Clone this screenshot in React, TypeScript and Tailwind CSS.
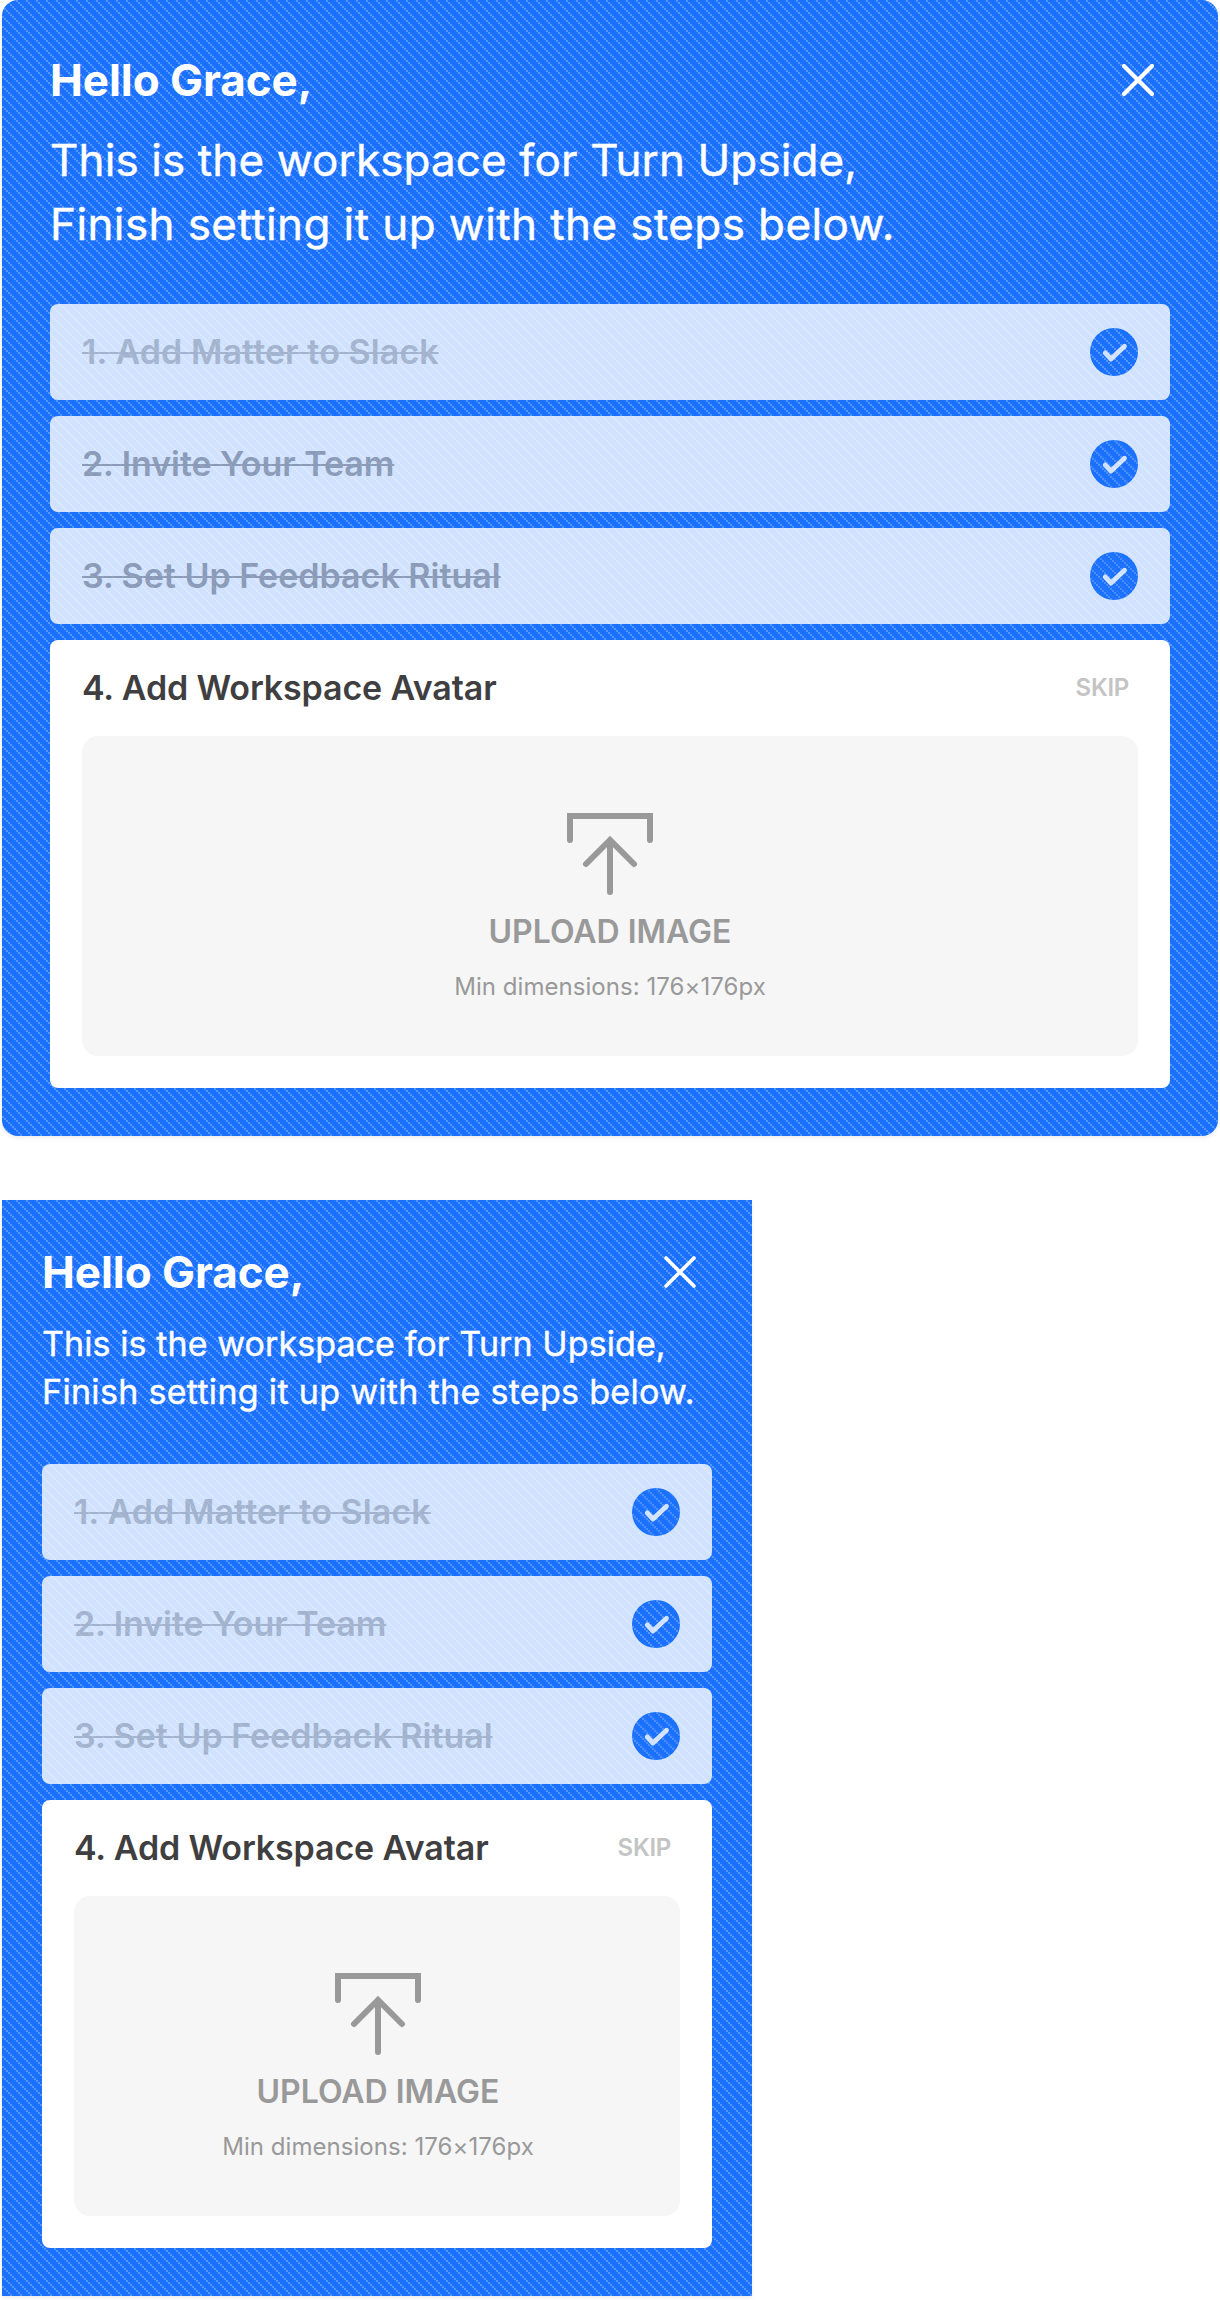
import React from 'react';

const steps = [
  { label: '1. Add Matter to Slack', tracking: 'tracking-[0.1px]' },
  { label: '2. Invite Your Team', tracking: 'tracking-[-0.07px]' },
  { label: '3. Set Up Feedback Ritual', tracking: 'tracking-normal' },
];

function Stripes({ id }: { id: string }) {
  return (
    <svg className="pointer-events-none absolute inset-0 h-full w-full" shapeRendering="crispEdges" aria-hidden="true">
      <defs>
        <pattern id={id} width="10" height="10" patternUnits="userSpaceOnUse">
          <path d="M4 0h2v2h-2zM6 2h2v2h-2zM8 4h2v2h-2zM0 6h2v2h-2zM2 8h2v2h-2z" fill="#fff" fillOpacity="0.26" />
        </pattern>
      </defs>
      <rect width="100%" height="100%" fill={`url(#${id})`} />
    </svg>
  );
}

function CloseIcon({ stroke }: { stroke: number }) {
  return (
    <svg width="32" height="32" viewBox="0 0 32 32" fill="none" stroke="#fff" strokeWidth={stroke} strokeLinecap="round">
      <path d="M2 2l28 28M30 2L2 30" />
    </svg>
  );
}

function DoneBadge({ id }: { id: string }) {
  return (
    <span className="relative block h-12 w-12 overflow-hidden rounded-full bg-[#1a70ff]">
      <Stripes id={id} />
      <svg className="relative" width="48" height="48" viewBox="0 0 48 48" fill="none" stroke="#fff" strokeWidth="4.8" strokeLinecap="round" strokeLinejoin="round">
        <path d="M15.2 24.9l5.8 6.2L34.5 18.2" />
      </svg>
    </span>
  );
}

function Step({ label, tracking, id, dark }: { label: string; tracking: string; id: string; dark: boolean }) {
  return (
    <li className="flex h-24 items-center justify-between rounded-lg bg-white px-8 opacity-80">
      <span
        className={`text-[34px] leading-10 font-semibold whitespace-nowrap line-through decoration-2 ${tracking} ${dark ? 'text-[#a6a6a8]' : 'text-[#c4c4c4]'}`}
      >
        {label}
      </span>
      <DoneBadge id={id} />
    </li>
  );
}

function AvatarStep({ compact }: { compact: boolean }) {
  return (
    <li className="h-[448px] rounded-lg bg-white px-8">
      <div className="flex h-24 items-center justify-between">
        <span className="text-[34px] leading-10 font-semibold tracking-[-0.13px] text-[#3f3f42]">4. Add Workspace Avatar</span>
        <button className="pr-[9px] text-2xl font-semibold tracking-[-0.3px] text-[#c4c4c4]">SKIP</button>
      </div>
      <div className={`flex h-80 flex-col items-center rounded-2xl bg-[#f6f6f6] pt-[77px] text-[#99999a] ${compact ? 'pl-0.5' : ''}`}>
        <svg width="86" height="82" viewBox="0 0 86 82" fill="none" stroke="currentColor" strokeWidth="6" strokeLinecap="round">
          <path d="M3 27V3h80v24M19 51l24-24 24 24M43 28v51" />
        </svg>
        <span className="mt-[17px] text-[32px] leading-10 font-semibold">UPLOAD IMAGE</span>
        <span className="mt-[19px] text-2xl leading-8 tracking-[0.05px]">Min dimensions: 176×176px</span>
      </div>
    </li>
  );
}

function WorkspaceCard({ compact = false }: { compact?: boolean }) {
  const name = compact ? 'compact' : 'wide';
  return (
    <section
      className={`relative overflow-hidden bg-[#1a70ff] shadow-[0_2px_4px_rgba(0,0,0,0.08)] ${compact ? 'h-[1096px] w-[750px] px-10 pt-10' : 'h-[1136px] w-[1216px] rounded-2xl px-12 pt-12'}`}
    >
      <Stripes id={`${name}-card`} />
      <div className="relative">
        <header className={`flex justify-between text-white ${compact ? 'h-[224px]' : 'h-[256px]'}`}>
          <div className="w-0 whitespace-nowrap">
            <h1 className="text-[44px] leading-16 font-bold tracking-[-0.05px]">Hello Grace,</h1>
            <p className={`mt-4 [-webkit-text-stroke:0.4px_white] ${compact ? 'text-[34px] leading-[48px]' : 'text-[44px] leading-16'}`}>
              <span className="tracking-[0.0026em]">This is the workspace for Turn Upside,</span>
              <br />
              <span className="tracking-[0.0092em]">Finish setting it up with the steps below.</span>
            </p>
          </div>
          <button aria-label="Close" className="mt-4 mr-4 h-8 w-8 shrink-0">
            <CloseIcon stroke={compact ? 3.6 : 4.2} />
          </button>
        </header>
        <ul className="flex flex-col gap-4">
          {steps.map((step, i) => (
            <Step key={step.label} {...step} id={`${name}-${i}`} dark={!compact && i > 0} />
          ))}
          <AvatarStep compact={compact} />
        </ul>
      </div>
    </section>
  );
}

export default function App() {
  return (
    <main className="flex h-[2300px] w-[1220px] flex-col gap-16 bg-white pl-0.5 font-['Inter',sans-serif]">
      <WorkspaceCard />
      <WorkspaceCard compact />
    </main>
  );
}
